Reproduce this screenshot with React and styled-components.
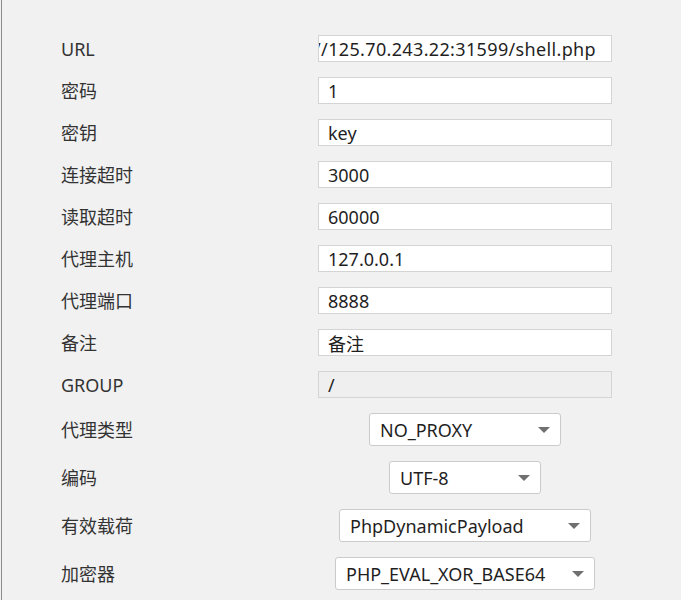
import * as React from "react";
import styled, { createGlobalStyle } from "styled-components";

const textFields = [
  { label: "URL", value: "http://125.70.243.22:31599/shell.php", scrolled: true },
  { label: "密码", value: "1" },
  { label: "密钥", value: "key" },
  { label: "连接超时", value: "3000" },
  { label: "读取超时", value: "60000" },
  { label: "代理主机", value: "127.0.0.1" },
  { label: "代理端口", value: "8888" },
  { label: "备注", value: "备注" },
  { label: "GROUP", value: "/", disabled: true }
];

const comboFields = [
  { label: "代理类型", value: "NO_PROXY", width: 192 },
  { label: "编码", value: "UTF-8", width: 152 },
  { label: "有效载荷", value: "PhpDynamicPayload", width: 252 },
  { label: "加密器", value: "PHP_EVAL_XOR_BASE64", width: 260 }
];

export default function App() {
  return (
    <>
      <GlobalStyle />
      <Panel>
        <Form>
          {textFields.map((f) => (
            <React.Fragment key={f.label}>
              <Label>{f.label}</Label>
              <Field $disabled={f.disabled} $scrolled={f.scrolled}>
                <span>{f.value}</span>
              </Field>
            </React.Fragment>
          ))}
          {comboFields.map((f) => (
            <React.Fragment key={f.label}>
              <Label>{f.label}</Label>
              <Combo $width={f.width}>
                <span>{f.value}</span>
                <Arrow viewBox="0 0 12 6" width="12" height="6">
                  <path d="M0 0H12L6 6Z" />
                </Arrow>
              </Combo>
            </React.Fragment>
          ))}
        </Form>
      </Panel>
    </>
  );
}

const GlobalStyle = createGlobalStyle`
  html, body {
    margin: 0;
    background: #f1f1f1;
  }
  body {
    font-family: "Noto Sans", "Noto Sans CJK SC", sans-serif;
  }
`;

const Panel = styled.div`
  min-height: 100vh;
  box-sizing: border-box;
  margin-left: 1px;
  border-left: 1px solid #8c8c8c;
  padding: 35px 0 20px 59px;
`;

const Form = styled.div`
  display: grid;
  grid-template-columns: 257px 294px;
  row-gap: 15px;
  align-items: center;
`;

const Label = styled.div`
  font-size: 18px;
  line-height: 24px;
  color: #333;
`;

const Field = styled.div`
  height: 27px;
  box-sizing: border-box;
  display: flex;
  align-items: center;
  justify-content: ${(p) => (p.$scrolled ? "flex-end" : "flex-start")};
  padding: 0 ${(p) => (p.$scrolled ? "15px" : "9px")} 0 9px;
  border: 1px solid #d4d4d4;
  background: ${(p) => (p.$disabled ? "#efefef" : "#fff")};
  font-size: 18px;
  letter-spacing: ${(p) => (p.$scrolled ? "0.35px" : "0")};
  color: #1f1f1f;
  white-space: nowrap;
  overflow: hidden;

  span {
    flex-shrink: 0;
  }
`;

const Combo = styled.div`
  justify-self: center;
  width: ${(p) => p.$width}px;
  height: 33px;
  box-sizing: border-box;
  display: flex;
  align-items: center;
  justify-content: space-between;
  padding: 0 10px;
  border: 1px solid #cbcbcb;
  border-radius: 3px;
  background: #fff;
  font-size: 18px;
  color: #1f1f1f;
  white-space: nowrap;
`;

const Arrow = styled.svg`
  flex-shrink: 0;
  fill: #707070;
`;
